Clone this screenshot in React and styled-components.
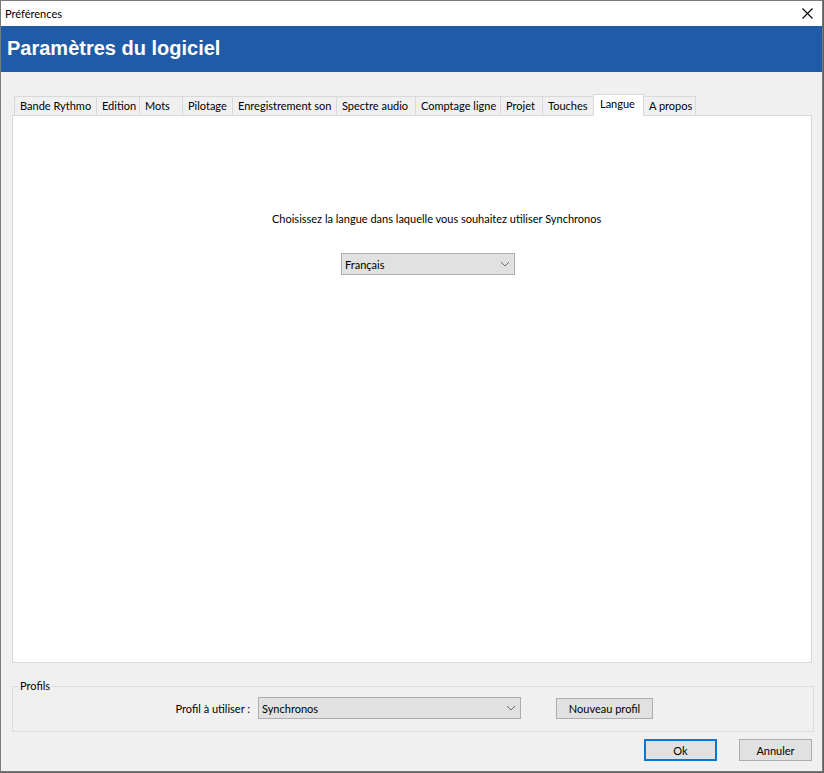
import React from "react";
import styled, { createGlobalStyle } from "styled-components";

const GlobalStyle = createGlobalStyle`
  html, body {
    margin: 0;
    padding: 0;
    background: #5f5f5f;
  }
  * {
    box-sizing: border-box;
  }
`;

const uiFont = `Lato, "Liberation Sans", Arial, sans-serif`;

const Window = styled.div`
  width: 823px;
  height: 772px;
  border: 1px solid #7a7a7a;
  background: #f0f0f0;
  display: flex;
  flex-direction: column;
  font-family: ${uiFont};
  font-size: 11px;
  color: #000;
`;

const TitleBar = styled.div`
  height: 25px;
  background: #fff;
  display: flex;
  align-items: center;
  justify-content: space-between;
  padding: 0 9px 0 4px;
`;

const Banner = styled.div`
  height: 46px;
  background: #1f5ba6;
  color: #fff;
  display: flex;
  align-items: center;
  padding: 0 0 2px 6px;
  font-family: "Liberation Sans", Arial, sans-serif;
  font-weight: bold;
  font-size: 20px;
`;

const Body = styled.div`
  flex: 1;
  display: flex;
  flex-direction: column;
  padding: 22px 10px 0 11px;
`;

const TabStrip = styled.div`
  height: 21px;
  display: flex;
  align-items: flex-end;
  padding-left: 2px;
  position: relative;
  z-index: 1;
`;

const Tab = styled.div`
  width: ${(p) => p.$w + 1}px;
  height: ${(p) => (p.$active ? 22 : 19)}px;
  margin-left: -1px;
  margin-bottom: ${(p) => (p.$active ? -1 : 0)}px;
  border: 1px solid #d9d9d9;
  border-bottom: none;
  background: ${(p) => (p.$active ? "#fff" : "#f0f0f0")};
  padding: ${(p) => (p.$active ? "2px 0 0 6px" : "2px 0 0 5px")};
  white-space: nowrap;
  line-height: 14px;
  position: relative;
  z-index: ${(p) => (p.$active ? 2 : 1)};
  &:first-child {
    margin-left: 0;
  }
`;

const Panel = styled.div`
  height: 548px;
  background: #fff;
  border: 1px solid #d9d9d9;
  display: flex;
  flex-direction: column;
  align-items: flex-start;
  padding: 96px 0 0 259px;
`;

const Prompt = styled.div`
  line-height: 14px;
`;

const Combo = styled.div`
  width: ${(p) => p.$w}px;
  height: 22px;
  margin-left: ${(p) => p.$ml || 0}px;
  margin-top: ${(p) => p.$mt || 0}px;
  background: #e1e1e1;
  border: 1px solid #adadad;
  display: flex;
  align-items: center;
  justify-content: space-between;
  padding: 0 4px 0 3px;
`;

const GroupBox = styled.fieldset`
  margin: 16px 0 0 0;
  padding: 4px 0 12px 0;
  border: 1px solid #dcdcdc;
  min-inline-size: 0;
  width: 802px;
`;

const Legend = styled.legend`
  margin-left: 6px;
  padding: 0 1px;
  line-height: 14px;
`;

const ProfileRow = styled.div`
  display: flex;
  align-items: center;
`;

const FieldLabel = styled.div`
  width: 237px;
  text-align: right;
  margin-right: 8px;
`;

const Button = styled.button`
  width: ${(p) => p.$w}px;
  height: ${(p) => p.$h || 22}px;
  margin-left: ${(p) => p.$ml || 0}px;
  margin-top: ${(p) => p.$mt || 0}px;
  background: #e1e1e1;
  border: ${(p) => (p.$default ? "2px solid #0078d7" : "1px solid #adadad")};
  font-family: ${uiFont};
  font-size: 11px;
  color: #000;
  padding: 0;
`;

const ButtonRow = styled.div`
  display: flex;
  justify-content: flex-end;
  gap: 22px;
  margin-top: 7px;
`;

function Chevron() {
  return (
    <svg width="10" height="6" viewBox="0 0 10 6">
      <path d="M1 1 L5 5 L9 1" fill="none" stroke="#6d6d6d" strokeWidth="1" />
    </svg>
  );
}

function CloseIcon() {
  return (
    <svg width="11" height="11" viewBox="0 0 11 11">
      <path d="M0.5 0.5 L10.5 10.5 M10.5 0.5 L0.5 10.5" stroke="#000" strokeWidth="1.1" />
    </svg>
  );
}

const tabs = [
  ["Bande Rythmo", 82],
  ["Edition", 43],
  ["Mots", 43],
  ["Pilotage", 50],
  ["Enregistrement son", 104],
  ["Spectre audio", 79],
  ["Comptage ligne", 85],
  ["Projet", 42],
  ["Touches", 51],
  ["Langue", 50],
  ["A propos", 52],
];

export default function App() {
  return (
    <>
      <GlobalStyle />
      <Window>
        <TitleBar>
          <span>Préférences</span>
          <CloseIcon />
        </TitleBar>
        <Banner>Paramètres du logiciel</Banner>
        <Body>
          <TabStrip>
            {tabs.map(([label, w]) => (
              <Tab key={label} $w={w} $active={label === "Langue"}>
                {label}
              </Tab>
            ))}
          </TabStrip>
          <Panel>
            <Prompt>Choisissez la langue dans laquelle vous souhaitez utiliser Synchronos</Prompt>
            <Combo $w={174} $ml={69} $mt={27}>
              <span>Français</span>
              <Chevron />
            </Combo>
          </Panel>
          <GroupBox>
            <Legend>Profils</Legend>
            <ProfileRow>
              <FieldLabel>Profil à utiliser :</FieldLabel>
              <Combo $w={263}>
                <span>Synchronos</span>
                <Chevron />
              </Combo>
              <Button $w={97} $h={21} $ml={35} $mt={1}>
                Nouveau profil
              </Button>
            </ProfileRow>
          </GroupBox>
          <ButtonRow>
            <Button $w={73} $default>
              Ok
            </Button>
            <Button $w={73}>Annuler</Button>
          </ButtonRow>
        </Body>
      </Window>
    </>
  );
}
